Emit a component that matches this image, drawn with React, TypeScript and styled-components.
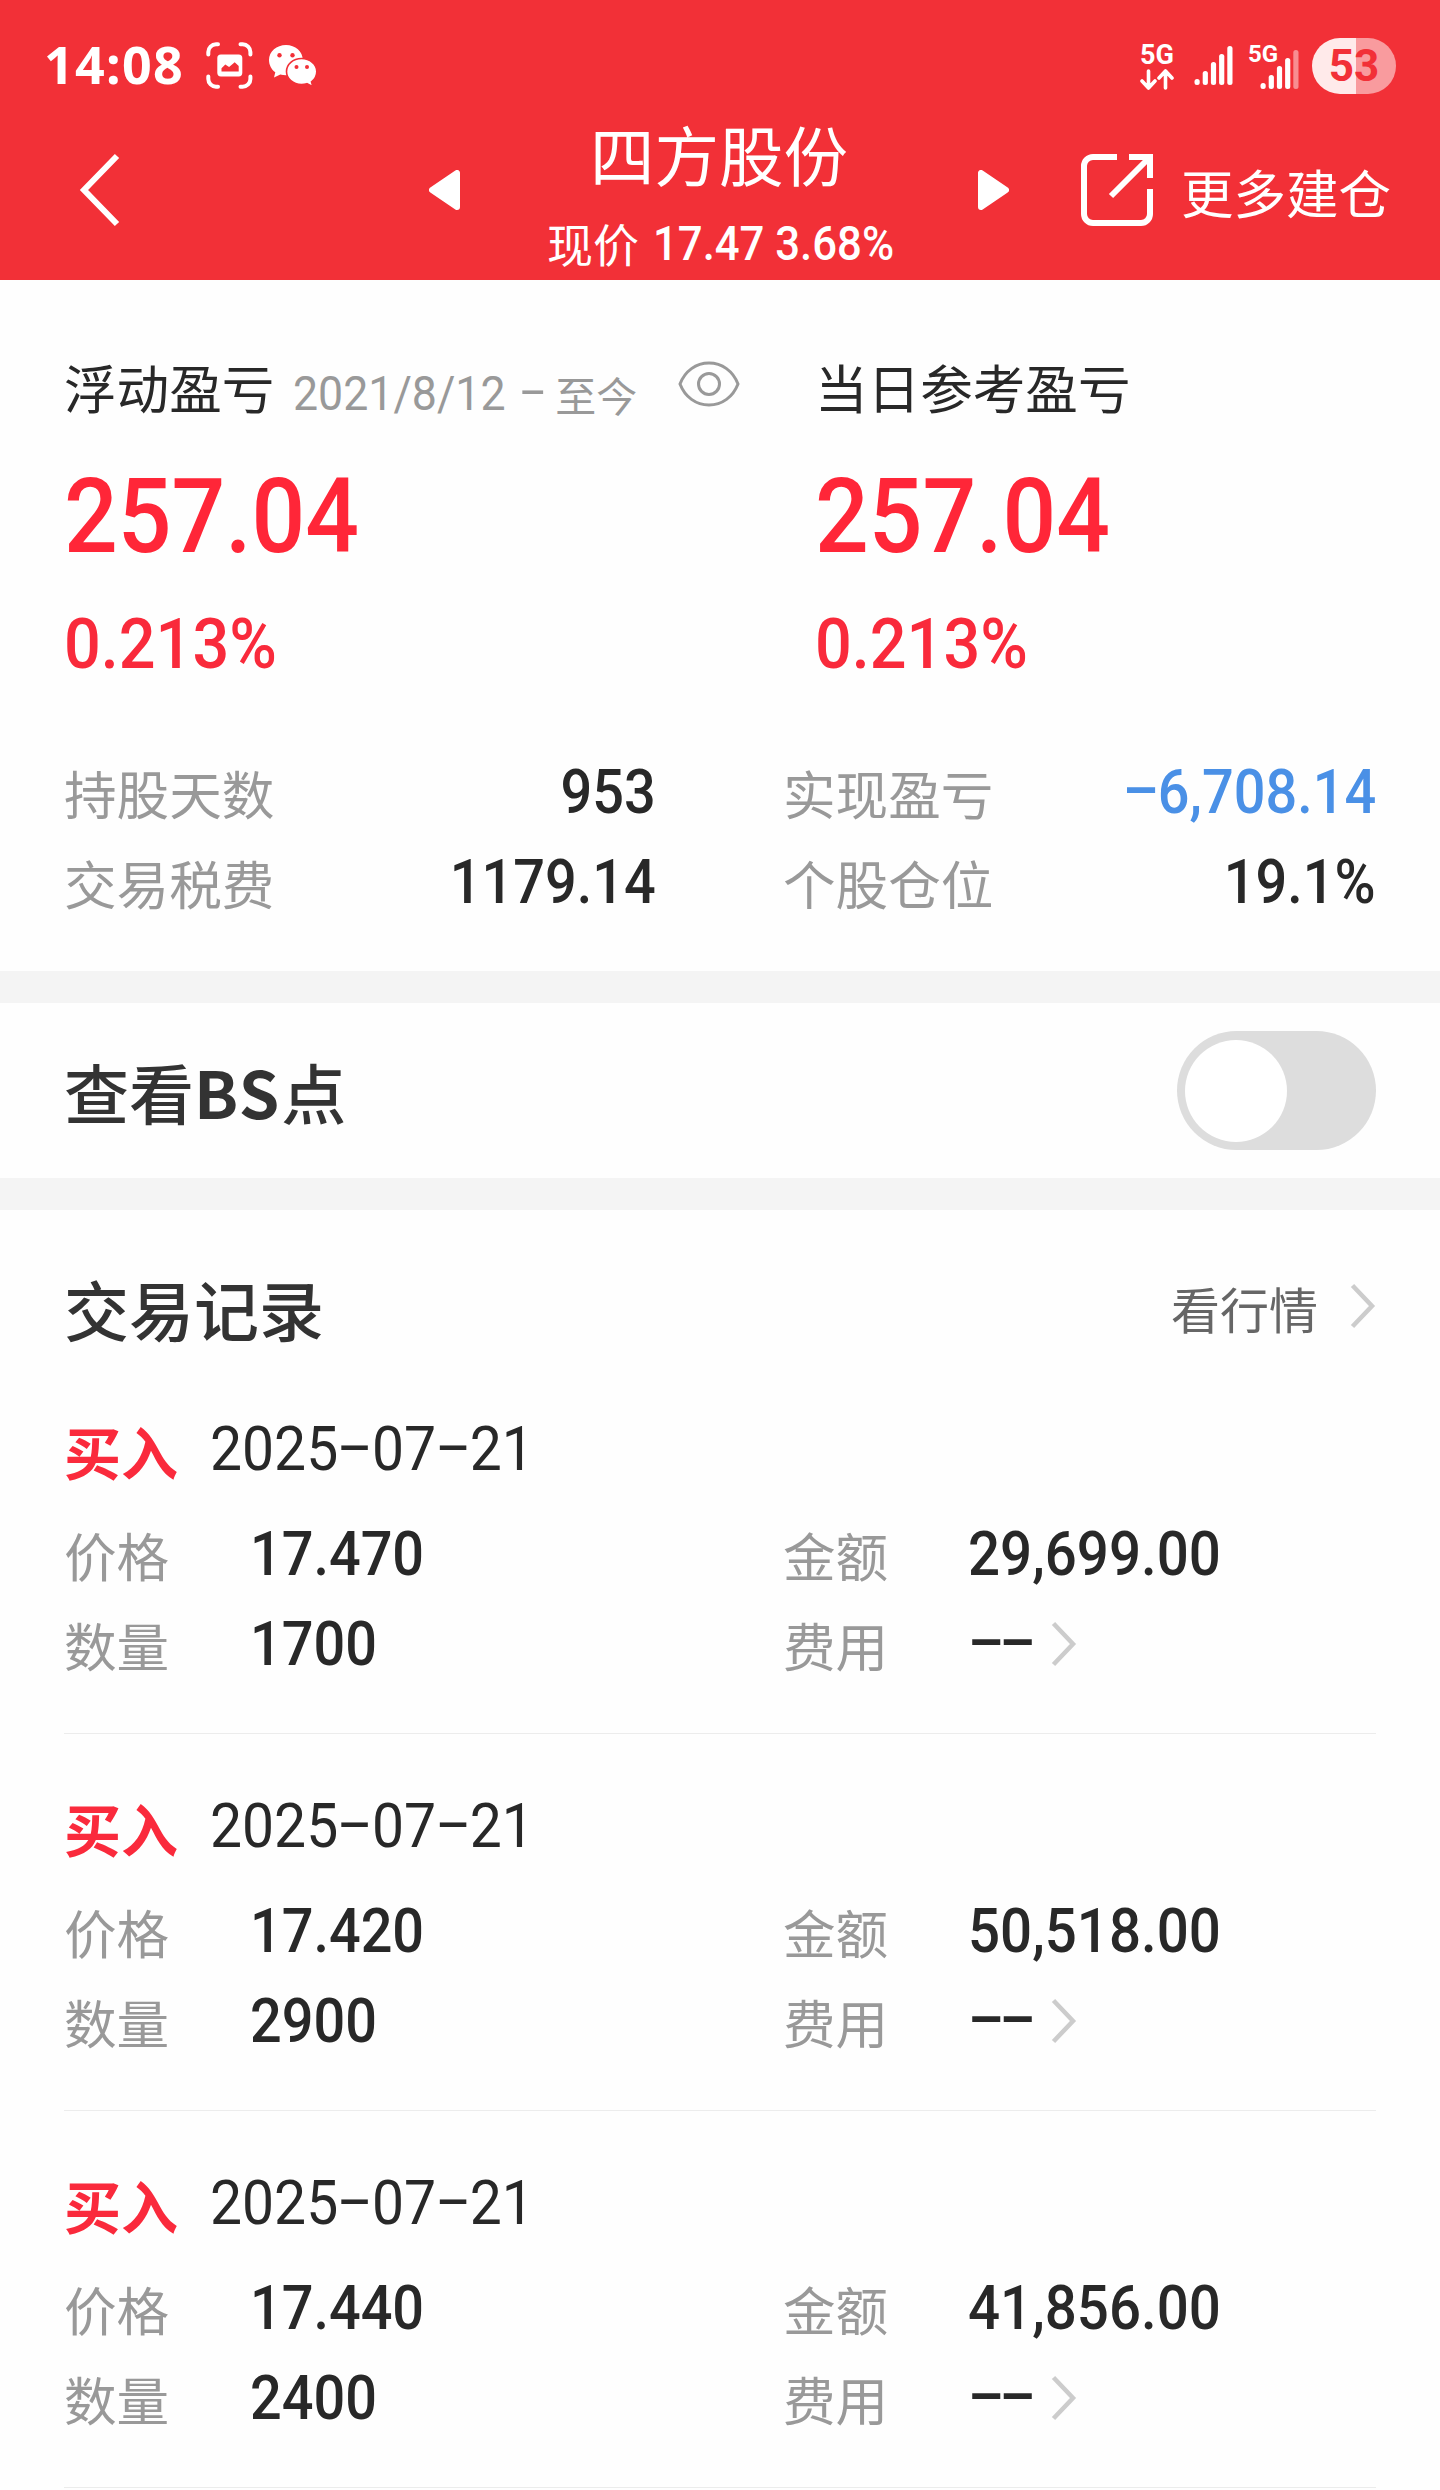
import React from "react";
import styled, { createGlobalStyle, css } from "styled-components";

const CJK = `"Noto Sans CJK SC", sans-serif`;
const DIGITS = `Roboto, "Noto Sans CJK SC", sans-serif`;
const RED = "#f23037";

const GlobalStyle = createGlobalStyle`
  *, *::before, *::after { box-sizing: border-box; }
  html, body { margin: 0; padding: 0; background: #fefefe; }
  body { font-family: ${CJK}; color: #282828; }
`;

const Page = styled.main`
  width: 1440px;
  min-height: 2490px;
  background: #fefefe;
  overflow: hidden;
`;

/* Figures are set slightly condensed. */
const Num = styled.span<{
  $size: number;
  $color?: string;
  $weight?: number;
  $k?: number;
  $from?: "left" | "right";
  $gap?: number;
}>`
  display: block;
  flex: none;
  font-family: ${DIGITS};
  font-size: ${(p) => p.$size}px;
  line-height: 1.1;
  font-weight: ${(p) => p.$weight ?? 500};
  color: ${(p) => p.$color ?? "#282828"};
  white-space: nowrap;
  transform: scaleX(${(p) => p.$k ?? 0.9});
  transform-origin: ${(p) => p.$from ?? "left"} center;
  ${(p) => p.$gap !== undefined && css`margin-left: ${p.$gap}px;`}
`;

const WideDash = styled.span<{ $shift?: number }>`
  display: inline-block;
  width: 0.59em;
  margin-left: ${(p) => p.$shift ?? 0}px;
  text-align: center;
  transform: translateY(-0.07em) scaleX(1.95);
`;

const DoubleDash = styled.span`
  display: block;
  width: 40px;
  font: 500 62px/68px ${DIGITS};
  letter-spacing: -3px;
  white-space: nowrap;
  transform: translateY(-4px) scaleX(1.75);
  transform-origin: left center;
`;

const Label = styled.span<{ $size?: number; $color?: string; $weight?: number }>`
  flex: none;
  padding-top: 2px;
  font-size: ${(p) => p.$size ?? 52.6}px;
  line-height: 1.1;
  color: ${(p) => p.$color ?? "#999"};
  font-weight: ${(p) => p.$weight ?? 400};
  white-space: nowrap;
`;

const Header = styled.header`
  height: 280px;
  background: ${RED};
  color: #fff;
`;

const StatusBar = styled.div`
  display: flex;
  align-items: center;
  height: 99px;
  padding: 32px 44px 0 44px;
`;

const Clock = styled.span`
  width: 162px;
  margin-top: -4px;
  font: 700 52px/60px "Noto Sans", sans-serif;
  letter-spacing: 1.3px;
`;

const StatusRight = styled.div`
  display: flex;
  align-items: center;
  margin-left: auto;
`;

const NetLabel = styled.span<{ $size: number }>`
  font: 700 ${(p) => p.$size}px/${(p) => p.$size}px Roboto, sans-serif;
`;

const NetColumn = styled.div`
  display: flex;
  flex-direction: column;
  align-items: center;
  width: 36px;
  margin-right: 19px;
`;

const SecondSim = styled.div`
  display: flex;
  align-items: flex-start;
  height: 48px;
  width: 51px;
  margin: 0 13px 0 15px;
`;

const SimBars = styled.div`
  margin: 8px 0 0 -18px;
`;

const Battery = styled.div`
  display: flex;
  align-items: center;
  justify-content: center;
  width: 84px;
  height: 56px;
  border-radius: 28px;
  background: linear-gradient(90deg, #ffeaea 0 44px, #f99b9e 44px);
  color: ${RED};
  font: 700 44px/56px Roboto, sans-serif;
`;

const NavBar = styled.nav`
  display: flex;
  align-items: center;
  height: 181px;
  padding: 0 0 0 78px;
`;

const PrevSlot = styled.div`
  display: flex;
  margin-left: 309px;
`;

const TitleBlock = styled.div`
  align-self: stretch;
  width: 516px;
  padding-top: 20px;
`;

const Title = styled.h1`
  margin: 0;
  font-size: 64.5px;
  line-height: 68px;
  font-weight: 400;
  text-align: center;
`;

const Quote = styled.div`
  display: flex;
  align-items: center;
  height: 52px;
  margin-top: 31px;
  padding-left: 86px;
`;

const QuoteLabel = styled.span`
  margin-top: -4px;
  font-size: 46px;
  line-height: 52px;
`;

const MoreButton = styled.div`
  display: flex;
  align-items: center;
  margin-left: 72px;
  gap: 28px;
`;

const MoreText = styled.span`
  padding-top: 2px;
  font-size: 52.5px;
  line-height: 58px;
  white-space: nowrap;
`;

const Summary = styled.section`
  height: 691px;
  padding: 76px 64px 0;
`;

const ProfitGrid = styled.div`
  display: grid;
  grid-template-columns: 751px 1fr;
`;

const ProfitHead = styled.div`
  display: flex;
  align-items: center;
  height: 60px;
`;

const Period = styled.div`
  display: flex;
  align-items: center;
  width: 380px;
  padding: 17px 0 0 19px;
`;

const PeriodEnd = styled.span`
  margin-left: -7px;
  font-size: 41px;
  line-height: 45px;
  color: #999;
`;

const EyeSlot = styled.div`
  display: flex;
  margin: -4px 0 0 24px;
`;

const BigValue = styled.div`
  display: flex;
  align-items: center;
  height: 110px;
  margin-top: 46px;
`;

const Percent = styled.div`
  display: flex;
  align-items: center;
  height: 80px;
  margin-top: 32px;
`;

const StatGrid = styled.div`
  display: grid;
  grid-template-columns: 592px 593px;
  column-gap: 127px;
  grid-auto-rows: 90px;
  margin-top: 63px;
`;

const Stat = styled.div`
  display: flex;
  align-items: center;
  justify-content: space-between;
`;

const Band = styled.div<{ $height: number }>`
  height: ${(p) => p.$height}px;
  background: #f4f4f4;
`;

const SwitchRow = styled.section`
  display: flex;
  align-items: center;
  justify-content: space-between;
  height: 175px;
  padding: 0 64px;
`;

const Heading = styled.h2`
  margin: 0;
  font-size: 65px;
  line-height: 72px;
  font-weight: 500;
  color: #333;
`;

const HeadingLatin = styled.span`
  font-weight: 700;
  letter-spacing: 1.8px;
`;

const Switch = styled.button`
  width: 199px;
  height: 119px;
  padding: 8px;
  border: 0;
  border-radius: 60px;
  background: #ddd;
`;

const Knob = styled.span`
  display: block;
  width: 102px;
  height: 102px;
  border-radius: 50%;
  background: #fff;
`;

const RecordsHead = styled.div`
  display: flex;
  align-items: center;
  justify-content: space-between;
  height: 147px;
  padding: 49px 64px 0;
`;

const QuoteLink = styled.div`
  display: flex;
  align-items: center;
  gap: 32px;
  margin-top: -2px;
`;

const ChevronSlot = styled.div`
  display: flex;
  margin-top: -2px;
`;

const Record = styled.article`
  height: 377px;
  margin: 0 64px;
  padding-top: 47px;
  border-bottom: 1px solid #ececec;
`;

const RecordHead = styled.div`
  display: flex;
  align-items: center;
  height: 90px;
  margin-bottom: 15px;
`;

const Side = styled.span`
  width: 146px;
  padding-top: 3px;
  font-size: 57px;
  line-height: 63px;
  font-weight: 700;
  color: #fa2a3c;
`;

const RecordGrid = styled.div`
  display: grid;
  grid-template-columns: 719px 1fr;
  grid-auto-rows: 90px;
`;

const Field = styled.div<{ $label: number }>`
  display: grid;
  grid-template-columns: ${(p) => p.$label}px auto;
  justify-content: start;
  align-items: center;
`;

const Fee = styled.div`
  display: flex;
  align-items: center;
`;

const FeeDashes = styled.div`
  width: 83px;
`;

function Chevron() {
  return (
    <svg width="26" height="46" viewBox="0 0 26 46" fill="none">
      <path d="M2.5 2.5 22 23 2.5 43.5" stroke="#ccc" strokeWidth="4.5" />
    </svg>
  );
}

function Triangle({ flip }: { flip?: boolean }) {
  return (
    <svg width="32" height="40" viewBox="0 0 32 40">
      <path
        transform={flip ? "translate(32 0) scale(-1 1)" : undefined}
        d="M28 3v34L3 20z"
        fill="#fff"
        stroke="#fff"
        strokeWidth="6"
        strokeLinejoin="round"
      />
    </svg>
  );
}

function Bars({ weak }: { weak?: boolean }) {
  const heights = [6, 14, 23, 31, 39];
  return (
    <svg width="39" height="40" viewBox="0 0 39 40">
      {heights.map((h, i) => (
        <rect
          key={h}
          x={0.5 + i * 8.2}
          y={39 - h}
          width="5.2"
          height={h}
          rx="2.5"
          fill="#fff"
          opacity={weak && i === 4 ? 0.45 : 1}
        />
      ))}
    </svg>
  );
}

function ScreenshotIcon() {
  return (
    <svg width="47" height="47" viewBox="0 0 47 47" fill="none">
      <path
        d="M2.3 12.5V10A7.7 7.7 0 0 1 10 2.3h2M34.5 2.3h2.2A7.7 7.7 0 0 1 44.4 10v2.5M44.4 34.5V37a7.7 7.7 0 0 1-7.7 7.7h-2.2M12 44.7h-2A7.7 7.7 0 0 1 2.3 37v-2.5"
        stroke="#fff"
        strokeWidth="4"
        strokeLinecap="round"
      />
      <rect x="11.3" y="12.4" width="25" height="22" rx="3.6" fill="#fff" />
      <path d="M15.5 29.5v-3.2l3.8-3.8 3.8 2.5 5.6-4.8 4 3.8v5.5z" fill={RED} />
    </svg>
  );
}

function WechatIcon() {
  return (
    <svg width="50" height="44" viewBox="0 0 50 44">
      <path
        d="M18 1C8.600 1 1 7.600 1 16c0 5 2.500 9.500 6.300 12.300L6 33.500l6.300-3c1.700.5 3.700.8 5.700.8 9.300 0 16.800-6.600 16.800-15.200S27.300 1 18 1z"
        fill="#fff"
      />
      <path
        d="M33.500 14.500c-8.500 0-15 5.800-15 13s6.500 13 15 13c1.900 0 3.700-.3 5.400-.8l6 3-1.400-4.800c3.300-2.500 5.300-6.200 5.300-10.400 0-7.200-6.800-13-15.300-13z"
        fill="#fff"
        stroke={RED}
        strokeWidth="1.600"
      />
      <circle cx="11.500" cy="11.200" r="2.200" fill={RED} />
      <circle cx="24.500" cy="11.200" r="2.200" fill={RED} />
      <circle cx="28.500" cy="23" r="2" fill={RED} />
      <circle cx="39" cy="23" r="2" fill={RED} />
    </svg>
  );
}

const StatusIcons = styled.div`
  display: flex;
  align-items: center;
  gap: 15px;
`;

interface Trade {
  price: string;
  count: string;
  amount: string;
}

const trades: Trade[] = [
  { price: "17.470", count: "1700", amount: "29,699.00" },
  { price: "17.420", count: "2900", amount: "50,518.00" },
  { price: "17.440", count: "2400", amount: "41,856.00" },
];

function TradeRecord({ price, count, amount }: Trade) {
  return (
    <Record>
      <RecordHead>
        <Side>买入</Side>
        <Num $size={62} $weight={400} $k={0.92}>
          2025<WideDash>-</WideDash>07<WideDash>-</WideDash>21
        </Num>
      </RecordHead>
      <RecordGrid>
        <Field $label={186}>
          <Label>价格</Label>
          <Num $size={62}>{price}</Num>
        </Field>
        <Field $label={185}>
          <Label>金额</Label>
          <Num $size={62} $k={0.91}>{amount}</Num>
        </Field>
        <Field $label={186}>
          <Label>数量</Label>
          <Num $size={62}>{count}</Num>
        </Field>
        <Field $label={185}>
          <Label>费用</Label>
          <Fee>
            <FeeDashes>
              <DoubleDash>--</DoubleDash>
            </FeeDashes>
            <Chevron />
          </Fee>
        </Field>
      </RecordGrid>
    </Record>
  );
}

export default function App() {
  return (
    <Page>
      <GlobalStyle />
      <Header>
        <StatusBar>
          <Clock>14:08</Clock>
          <StatusIcons>
            <ScreenshotIcon />
            <WechatIcon />
          </StatusIcons>
          <StatusRight>
            <NetColumn>
              <NetLabel $size={27}>5G</NetLabel>
              <svg width="34" height="21" viewBox="0 0 34 21" fill="none">
                <path
                  d="M8.500 2v16M2 12l6.500 7 6.500-7M25.500 19V3M19 9l6.500-7L32 9"
                  stroke="#fff"
                  strokeWidth="3.600"
                  strokeLinecap="round"
                  strokeLinejoin="round"
                />
              </svg>
            </NetColumn>
            <Bars />
            <SecondSim>
              <NetLabel $size={24}>5G</NetLabel>
              <SimBars>
                <Bars weak />
              </SimBars>
            </SecondSim>
            <Battery>53</Battery>
          </StatusRight>
        </StatusBar>
        <NavBar>
          <svg width="42" height="74" viewBox="0 0 42 74" fill="none">
            <path d="M39 3 6 37l33 34" stroke="#fff" strokeWidth="6" />
          </svg>
          <PrevSlot>
            <Triangle />
          </PrevSlot>
          <TitleBlock>
            <Title>四方股份</Title>
            <Quote>
              <QuoteLabel>现价</QuoteLabel>
              <Num $size={48} $color="#fff" $gap={14} $k={0.91}>17.47 3.68%</Num>
            </Quote>
          </TitleBlock>
          <Triangle flip />
          <MoreButton>
            <svg width="72" height="72" viewBox="0 0 72 72" fill="none">
              <path
                d="M36 3H12a9 9 0 0 0-9 9v48a9 9 0 0 0 9 9h48a9 9 0 0 0 9-9V35"
                stroke="#fff"
                strokeWidth="6"
              />
              <path d="M48 3h21v21M69 3 30 42" stroke="#fff" strokeWidth="6" />
            </svg>
            <MoreText>更多建仓</MoreText>
          </MoreButton>
        </NavBar>
      </Header>

      <Summary>
        <ProfitGrid>
          <div>
            <ProfitHead>
              <Label $color="#282828">浮动盈亏</Label>
              <Period>
                <Num $size={47.5} $color="#999" $weight={400} $k={0.94}>
                  2021/8/12 <WideDash $shift={3}>-</WideDash>
                </Num>
                <PeriodEnd>至今</PeriodEnd>
              </Period>
              <EyeSlot>
                <svg width="62" height="46" viewBox="0 0 62 46" fill="none" stroke="#999" strokeWidth="3">
                  <path d="M2 23C7 10 18 2 31 2s24 8 29 21C55 36 44 44 31 44S7 36 2 23z" />
                  <circle cx="31" cy="23" r="10.500" />
                </svg>
              </EyeSlot>
            </ProfitHead>
            <BigValue>
              <Num $size={103} $color="#ff2638" $k={0.918}>257.04</Num>
            </BigValue>
            <Percent>
              <Num $size={70} $color="#f92a3b" $k={0.925}>0.213%</Num>
            </Percent>
          </div>
          <div>
            <ProfitHead>
              <Label $color="#282828">当日参考盈亏</Label>
            </ProfitHead>
            <BigValue>
              <Num $size={103} $color="#ff2638" $k={0.918}>257.04</Num>
            </BigValue>
            <Percent>
              <Num $size={70} $color="#f92a3b" $k={0.925}>0.213%</Num>
            </Percent>
          </div>
        </ProfitGrid>
        <StatGrid>
          <Stat>
            <Label>持股天数</Label>
            <Num $size={62} $from="right">953</Num>
          </Stat>
          <Stat>
            <Label>实现盈亏</Label>
            <Num $size={62} $from="right" $color="#4a90e6">
              <WideDash>-</WideDash>6,708.14
            </Num>
          </Stat>
          <Stat>
            <Label>交易税费</Label>
            <Num $size={62} $from="right">1179.14</Num>
          </Stat>
          <Stat>
            <Label>个股仓位</Label>
            <Num $size={62} $from="right">19.1%</Num>
          </Stat>
        </StatGrid>
      </Summary>

      <Band $height={32} />
      <SwitchRow>
        <Heading>
          查看<HeadingLatin>BS</HeadingLatin>点
        </Heading>
        <Switch aria-label="查看BS点">
          <Knob />
        </Switch>
      </SwitchRow>
      <Band $height={32} />

      <RecordsHead>
        <Heading>交易记录</Heading>
        <QuoteLink>
          <Label $size={49} $color="#666">看行情</Label>
          <ChevronSlot>
            <Chevron />
          </ChevronSlot>
        </QuoteLink>
      </RecordsHead>
      {trades.map((trade) => (
        <TradeRecord key={trade.price} {...trade} />
      ))}
    </Page>
  );
}
